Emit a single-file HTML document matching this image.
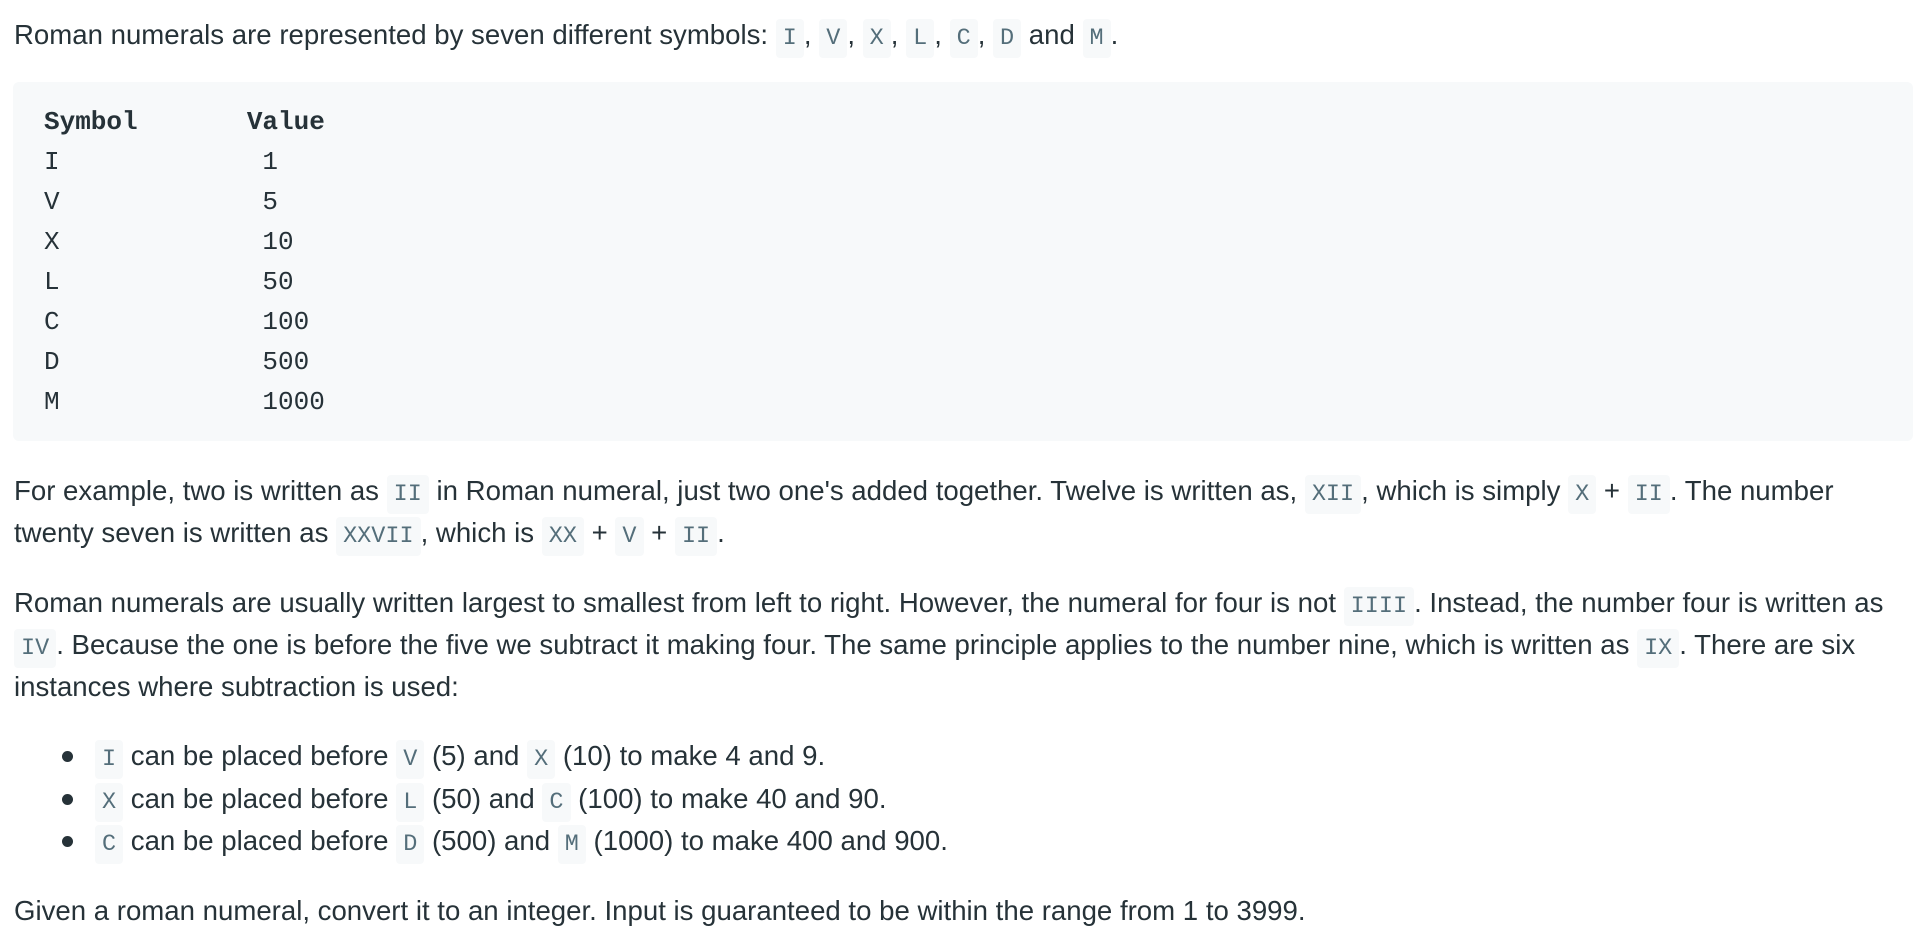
<!DOCTYPE html>
<html><head><meta charset="utf-8"><style>
html,body{margin:0;padding:0;background:#fff;width:1920px;height:952px;overflow:hidden}
body{font-family:"Liberation Sans",sans-serif;font-size:27.6px;color:#263238;letter-spacing:0}
.l{position:absolute;left:14px;white-space:nowrap;line-height:42px}
code{font-family:"Liberation Mono",monospace;font-size:23.5px;color:#546e7a;background:#f7f9fa;border-radius:4px;padding:6px 7px;letter-spacing:0}
pre{position:absolute;left:13px;top:82px;width:1900px;height:359px;margin:0;background:#f7f9fa;border-radius:6px;box-sizing:border-box;padding:20px 31px;font-family:"Liberation Mono",monospace;font-size:26px;line-height:40px;color:#263238;letter-spacing:0}
.b{position:absolute;left:62px;width:11px;height:11px;border-radius:50%;background:#263238}
</style></head><body>
<div class="l" style="top:14px">Roman numerals are represented by seven different symbols: <code>I</code>, <code>V</code>, <code>X</code>, <code>L</code>, <code>C</code>, <code>D</code> and <code>M</code>.</div>
<pre><b>Symbol       Value</b>
I             1
V             5
X             10
L             50
C             100
D             500
M             1000</pre>
<div class="l" style="top:470px">For example, two is written as <code>II</code> in Roman numeral, just two one's added together. Twelve is written as, <code>XII</code>, which is simply <code>X</code> + <code>II</code>. The number</div>
<div class="l" style="top:512px">twenty seven is written as <code>XXVII</code>, which is <code>XX</code> + <code>V</code> + <code>II</code>.</div>
<div class="l" style="top:582px">Roman numerals are usually written largest to smallest from left to right. However, the numeral for four is not <code>IIII</code>. Instead, the number four is written as</div>
<div class="l" style="top:624px"><code>IV</code>. Because the one is before the five we subtract it making four. The same principle applies to the number nine, which is written as <code>IX</code>. There are six</div>
<div class="l" style="top:666px">instances where subtraction is used:</div>
<div class="b" style="top:751px"></div><div class="l" style="left:95px;top:735px"><code>I</code> can be placed before <code>V</code> (5) and <code>X</code> (10) to make 4 and 9.</div>
<div class="b" style="top:794px"></div><div class="l" style="left:95px;top:778px"><code>X</code> can be placed before <code>L</code> (50) and <code>C</code> (100) to make 40 and 90.</div>
<div class="b" style="top:836px"></div><div class="l" style="left:95px;top:820px"><code>C</code> can be placed before <code>D</code> (500) and <code>M</code> (1000) to make 400 and 900.</div>
<div class="l" style="top:890px">Given a roman numeral, convert it to an integer. Input is guaranteed to be within the range from 1 to 3999.</div>
</body></html>
